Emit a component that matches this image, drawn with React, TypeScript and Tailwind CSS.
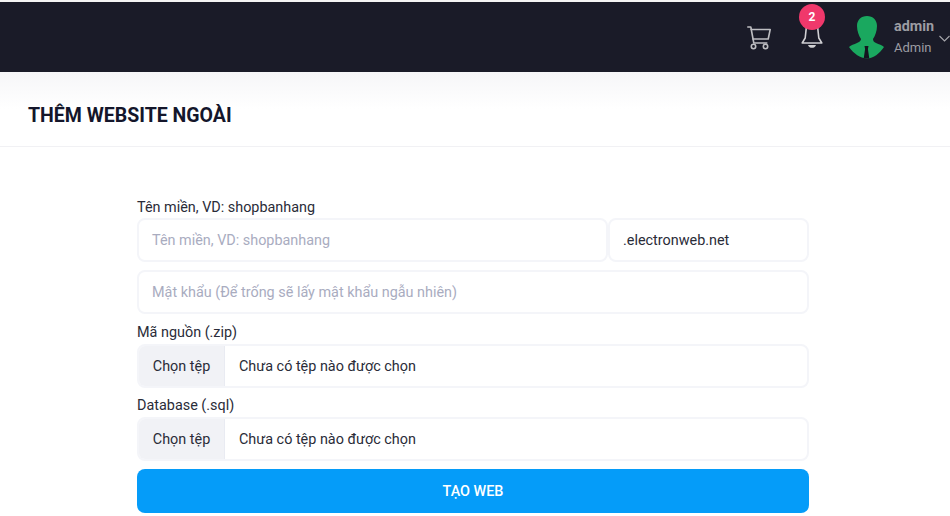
import React from "react";

function FileRow() {
  return (
    <div className="flex h-[44px] w-full overflow-hidden rounded-[8px] border-2 border-[#f4f5f9] bg-white text-[14.4px] text-[#2a2c38]">
      <div className="flex w-[85px] items-center justify-center bg-[#f1f2f6] pt-[2px]">Chọn tệp</div>
      <div className="flex items-center border-l border-[#e9ebf2] pl-[14px] pt-[2px]">Chưa có tệp nào được chọn</div>
    </div>
  );
}

export default function App() {
  return (
    <div className="h-[516px] w-[950px] overflow-hidden bg-white font-['Roboto',sans-serif]">
      <div className="h-[2px] bg-[#f4f4f4]" />
      <header className="flex h-[70px] items-center justify-end bg-[#1a1b28]">
        <svg className="mr-[30px] mt-[2px]" width="24" height="24" viewBox="0 0 24 24" fill="none" stroke="#bdbdc1" strokeWidth="1.6" strokeLinejoin="round" strokeLinecap="round">
          <path d="M.8 1h3l3 16h13" />
          <path d="M4.200 3.500h19l-2 9.500H6" />
          <circle cx="6.500" cy="20.500" r="2.200" />
          <circle cx="18.500" cy="20.500" r="2.200" />
        </svg>
        <div className="relative mr-[26px] h-[40px] w-[22px]">
          <svg className="absolute left-0 top-[8px]" width="22" height="24" viewBox="0 0 22 24" fill="none" stroke="#d0d0d3" strokeWidth="1.6" strokeLinejoin="round">
            <path d="M5.500 .8h11l1.300 12.200 3 5H1.200l3-5z" />
            <path d="M7 20h8c-.6 2-2.400 2.800-4 2.800S7.600 22 7 20z" fill="#d0d0d3" stroke="none" />
          </svg>
          <div className="absolute left-[-2px] top-[-13px] flex h-[26px] w-[26px] items-center justify-center rounded-full bg-[#f0386b] text-[12px] font-bold text-white">2</div>
        </div>
        <svg className="mr-[10px] mt-[1px]" width="35" height="43" viewBox="0 0 35 43">
          <path d="M18 0C24 0 28 4 28 10C28 15 26 20 24 23C24 25 25 26 27 27C30 28.500 33 29 35 31C30 38 25 42 18 42.500C11 42 5 38 0 31C2 29 5 28.500 8 27C10 26 12 25 12 23C10 20 8 15 8 10C8 4 12 0 18 0z" fill="#1aa85f" />
          <path d="M15.500 30h4l-.6 3 1.400 9.500h-5.600l1.400-9.500z" fill="#14151f" />
        </svg>
        <div className="mr-[4px] w-[41px] leading-none">
          <div className="text-[14.4px] font-bold text-[#9d9da3]">admin</div>
          <div className="mt-[7px] text-[13px] text-[#9d9da3]">Admin</div>
        </div>
        <svg className="mt-[2px]" width="11" height="7" viewBox="0 0 11 7" fill="none" stroke="#a6a6ab" strokeWidth="1.1">
          <path d="M.5 1l5 5 5-5" />
        </svg>
      </header>
      <div className="flex h-[75px] items-center border-b border-[#f1f1f4] bg-gradient-to-b from-[#f6f6f8] via-white to-white pl-[28px] pt-[14px]">
        <h1 className="text-[19.5px] font-bold text-[#14162b]">THÊM WEBSITE NGOÀI</h1>
      </div>
      <form className="ml-[137px] w-[672px] pt-[49px]">
        <label className="block h-[22px] text-[14.4px] leading-[24px] text-[#2a2c38]">Tên miền, VD: shopbanhang</label>
        <div className="flex">
          <div className="flex h-[44px] w-[471px] items-center rounded-[8px] border-2 border-[#f4f5f9] pl-[13px] pt-[2px] text-[14.4px] text-[#a9acbf]">Tên miền, VD: shopbanhang</div>
          <div className="flex h-[44px] w-[201px] items-center rounded-[8px] border-2 border-[#f4f5f9] pl-[13px] pt-[2px] text-[14.4px] text-[#2a2c38]">.electronweb.net</div>
        </div>
        <div className="mt-[8px] flex h-[44px] items-center rounded-[8px] border-2 border-[#f4f5f9] pl-[13px] pt-[2px] text-[14.4px] text-[#a9acbf]">Mật khẩu (Để trống sẽ lấy mật khẩu ngẫu nhiên)</div>
        <label className="mt-[7px] block h-[23px] text-[14.4px] leading-[24px] text-[#2a2c38]">Mã nguồn (.zip)</label>
        <FileRow />
        <label className="mt-[6px] block h-[23px] text-[14.4px] leading-[24px] text-[#2a2c38]">Database (.sql)</label>
        <FileRow />
        <button type="button" className="mt-[8px] flex h-[44px] w-full items-center justify-center rounded-[8px] bg-[#059cf9] pt-[2px] text-[14.4px] font-medium text-white">TẠO WEB</button>
      </form>
    </div>
  );
}
